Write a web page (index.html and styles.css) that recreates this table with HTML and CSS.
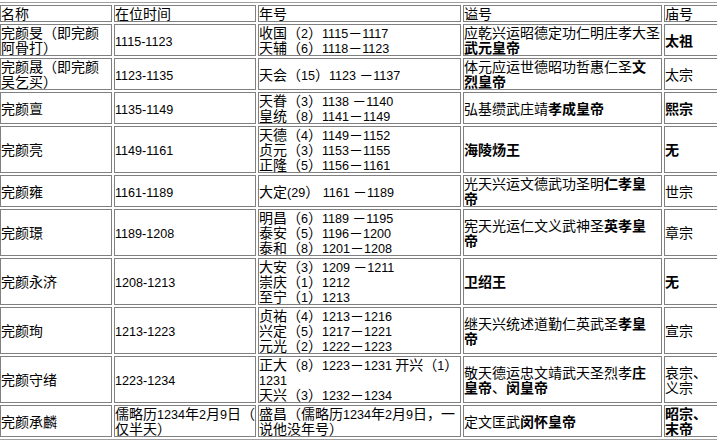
FILE: index.html
```html
<!DOCTYPE html>
<html lang="zh">
<head>
<meta charset="utf-8">
<title>金朝皇帝</title>
<link rel="stylesheet" href="styles.css">
</head>
<body>
<table class="reigns">
  <tr>
    <th class="c1">名称</th>
    <th class="c2">在位时间</th>
    <th class="c3">年号</th>
    <th class="c4">谥号</th>
    <th class="c5">庙号</th>
  </tr>
  <tr>
    <td>完颜旻（即完颜<br>阿骨打）</td>
    <td><span class="n">1115-1123</span></td>
    <td>收国（<span class="n">2</span>）<span class="n">1115</span>－<span class="n">1117</span><br>天辅（<span class="n">6</span>）<span class="n">1118</span>－<span class="n">1123</span></td>
    <td>应乾兴运昭德定功仁明庄孝大圣<br><b>武元皇帝</b></td>
    <td><b>太祖</b></td>
  </tr>
  <tr>
    <td>完颜晟（即完颜<br>吴乞买）</td>
    <td><span class="n">1123-1135</span></td>
    <td>天会（<span class="n">15</span>）<span class="n">1123</span> －<span class="n">1137</span></td>
    <td>体元应运世德昭功哲惠仁圣<b>文</b><br><b>烈皇帝</b></td>
    <td>太宗</td>
  </tr>
  <tr>
    <td>完颜亶</td>
    <td><span class="n">1135-1149</span></td>
    <td>天眷（<span class="n">3</span>）<span class="n">1138</span> －<span class="n">1140</span><br>皇统（<span class="n">8</span>）<span class="n">1141</span>－<span class="n">1149</span></td>
    <td>弘基缵武庄靖<b>孝成皇帝</b></td>
    <td><b>熙宗</b></td>
  </tr>
  <tr>
    <td>完颜亮</td>
    <td><span class="n">1149-1161</span></td>
    <td>天德（<span class="n">4</span>）<span class="n">1149</span>－<span class="n">1152</span><br>贞元（<span class="n">3</span>）<span class="n">1153</span>－<span class="n">1155</span><br>正隆（<span class="n">5</span>）<span class="n">1156</span>－<span class="n">1161</span></td>
    <td><b>海陵炀王</b></td>
    <td><b>无</b></td>
  </tr>
  <tr>
    <td>完颜雍</td>
    <td><span class="n">1161-1189</span></td>
    <td>大定<span class="n">(29</span>）<span class="n">&nbsp;1161</span> －<span class="n">1189</span></td>
    <td>光天兴运文德武功圣明<b>仁孝皇</b><br><b>帝</b></td>
    <td>世宗</td>
  </tr>
  <tr>
    <td>完颜璟</td>
    <td><span class="n">1189-1208</span></td>
    <td>明昌（<span class="n">6</span>）<span class="n">1189</span> －<span class="n">1195</span><br>泰安（<span class="n">5</span>）<span class="n">1196</span>－<span class="n">1200</span><br>泰和（<span class="n">8</span>）<span class="n">1201</span>－<span class="n">1208</span></td>
    <td>宪天光运仁文义武神圣<b>英孝皇</b><br><b>帝</b></td>
    <td>章宗</td>
  </tr>
  <tr>
    <td>完颜永济</td>
    <td><span class="n">1208-1213</span></td>
    <td>大安（<span class="n">3</span>）<span class="n">1209</span> －<span class="n">1211</span><br>崇庆（<span class="n">1</span>）<span class="n">1212</span><br>至宁（<span class="n">1</span>）<span class="n">1213</span></td>
    <td><b>卫绍王</b></td>
    <td><b>无</b></td>
  </tr>
  <tr>
    <td>完颜珣</td>
    <td><span class="n">1213-1223</span></td>
    <td>贞祐（<span class="n">4</span>）<span class="n">1213</span>－<span class="n">1216</span><br>兴定（<span class="n">5</span>）<span class="n">1217</span>－<span class="n">1221</span><br>元光（<span class="n">2</span>）<span class="n">1222</span>－<span class="n">1223</span></td>
    <td>继天兴统述道勤仁英武圣<b>孝皇</b><br><b>帝</b></td>
    <td>宣宗</td>
  </tr>
  <tr>
    <td>完颜守绪</td>
    <td><span class="n">1223-1234</span></td>
    <td>正大（<span class="n">8</span>）<span class="n">1223</span>－<span class="n">1231</span> 开兴（<span class="n">1</span>）<br><span class="n">1231</span><br>天兴（<span class="n">3</span>）<span class="n">1232</span>－<span class="n">1234</span></td>
    <td>敬天德运忠文靖武天圣烈孝<b>庄</b><br><b>皇帝</b>、<b>闵皇帝</b></td>
    <td>哀宗、<br>义宗</td>
  </tr>
  <tr>
    <td>完颜承麟</td>
    <td>儒略历<span class="n">1234</span>年<span class="n">2</span>月<span class="n">9</span>日（<br>仅半天）</td>
    <td>盛昌（儒略历<span class="n">1234</span>年<span class="n">2</span>月<span class="n">9</span>日，一<br>说他没年号）</td>
    <td>定文匡武<b>闵怀皇帝</b></td>
    <td><b>昭宗、<br>末帝</b></td>
  </tr>
</table>
</body>
</html>
```
FILE: styles.css
```css
html, body {
  margin: 0;
  padding: 0;
  background: #ffffff;
  overflow: hidden;
}

body {
  font-family: "Noto Sans CJK SC", sans-serif;
  font-size: 14px;
  color: #000000;
}

.reigns {
  border-collapse: separate;
  border-spacing: 2px;
  border: 1px solid #a0a0a0;
  margin: 2px 0 0 -3px;
  table-layout: fixed;
  width: 724px;
}

.reigns th,
.reigns td {
  box-sizing: border-box;
  border: 1px solid #808080;
  padding: 0;
  line-height: 15px;
  vertical-align: middle;
  text-align: left;
  white-space: nowrap;
  font-weight: normal;
}

.reigns b {
  font-weight: bold;
}

.c1 { width: 112px; }
.c2 { width: 142px; }
.c3 { width: 203px; }
.c4 { width: 199px; }
.c5 { width: 54px; }

.n {
  font-family: "Liberation Sans", sans-serif;
  font-size: 12.6px;
  line-height: 0;
}
```
